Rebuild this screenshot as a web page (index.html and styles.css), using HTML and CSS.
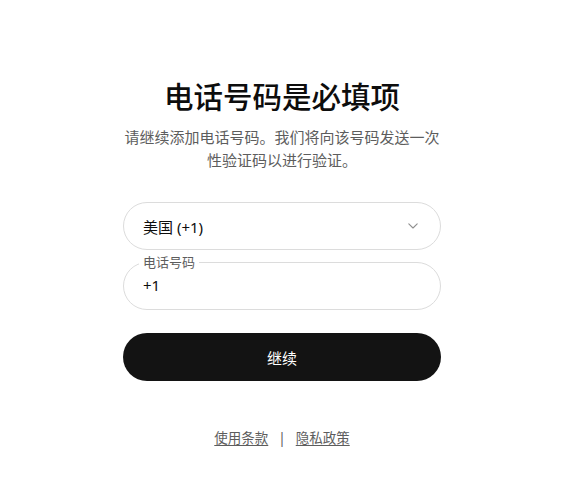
FILE: index.html
```html
<!DOCTYPE html>
<html lang="zh-CN">
<head>
<meta charset="utf-8">
<title>电话号码是必填项</title>
<link rel="stylesheet" href="styles.css">
</head>
<body>
<main class="page">
  <section class="card">
    <h1 class="title">电话号码是必填项</h1>
    <p class="subtitle">请继续添加电话号码。我们将向该号码发送一次性验证码以进行验证。</p>
    <form class="form">
      <div class="select" role="button">
        <span class="select-text">美国 (+1)</span>
        <svg class="chevron" width="10" height="6" viewBox="0 0 10 6" aria-hidden="true">
          <path d="M0.8 0.8l4.2 4.2l4.2-4.2" fill="none" stroke="#8f8f8f" stroke-width="1.1" stroke-linecap="round" stroke-linejoin="round"/>
        </svg>
      </div>
      <fieldset class="field">
        <legend class="field-label">电话号码</legend>
        <div class="field-value">+1</div>
      </fieldset>
      <button type="button" class="btn">继续</button>
    </form>
    <footer class="footer">
      <a class="link" href="#">使用条款</a>
      <span class="sep">|</span>
      <a class="link" href="#">隐私政策</a>
    </footer>
  </section>
</main>
</body>
</html>
```
FILE: styles.css
```css
* { box-sizing: border-box; }
html, body { margin: 0; padding: 0; background: #fff; }
body {
  font-family: "Noto Sans", "Noto Sans CJK SC", sans-serif;
  color: #0d0d0d;
}
.page {
  display: flex;
  justify-content: center;
  padding-right: 5px;
}
.card {
  width: 318px;
  display: flex;
  flex-direction: column;
  align-items: stretch;
  padding-top: 79px;
}
.title {
  margin: 0;
  font-size: 29.5px;
  line-height: 36px;
  font-weight: 500;
  text-align: center;
  color: #0d0d0d;
}
.subtitle {
  margin: 11px 0 0;
  font-size: 15px;
  line-height: 23px;
  text-align: center;
  color: #5d5d5d;
}
.form {
  margin-top: 30px;
  display: flex;
  flex-direction: column;
}
.select {
  height: 48px;
  border: 1px solid #dcdcdc;
  border-radius: 24px;
  display: flex;
  align-items: center;
  justify-content: space-between;
  padding: 0 22px 0 19px;
  font-size: 15px;
  color: #0d0d0d;
}
.chevron { display: block; }
.field {
  margin: 4px 0 0;
  border: 1px solid #dcdcdc;
  border-radius: 24px;
  padding: 0 19px 0 19px;
  height: 56px;
  min-width: 0;
}
.field-label {
  font-size: 13px;
  line-height: 16px;
  color: #5d5d5d;
  padding: 0 4px;
  margin-left: -4px;
}
.field-value {
  font-size: 15px;
  line-height: 22px;
  padding-top: 4px;
  color: #0d0d0d;
}
.btn {
  margin-top: 23px;
  height: 48px;
  border: none;
  border-radius: 24px;
  background: #131313;
  color: #fff;
  font-family: inherit;
  font-size: 15px;
  font-weight: 400;
  cursor: pointer;
}
.footer {
  margin-top: 47px;
  display: flex;
  justify-content: center;
  align-items: center;
  font-size: 13.5px;
  line-height: 20px;
  color: #5d5d5d;
}
.link {
  color: #5d5d5d;
  text-decoration: underline;
  text-underline-offset: 2px;
}
.sep {
  margin: 0 10px;
  color: #5d5d5d;
}
```
